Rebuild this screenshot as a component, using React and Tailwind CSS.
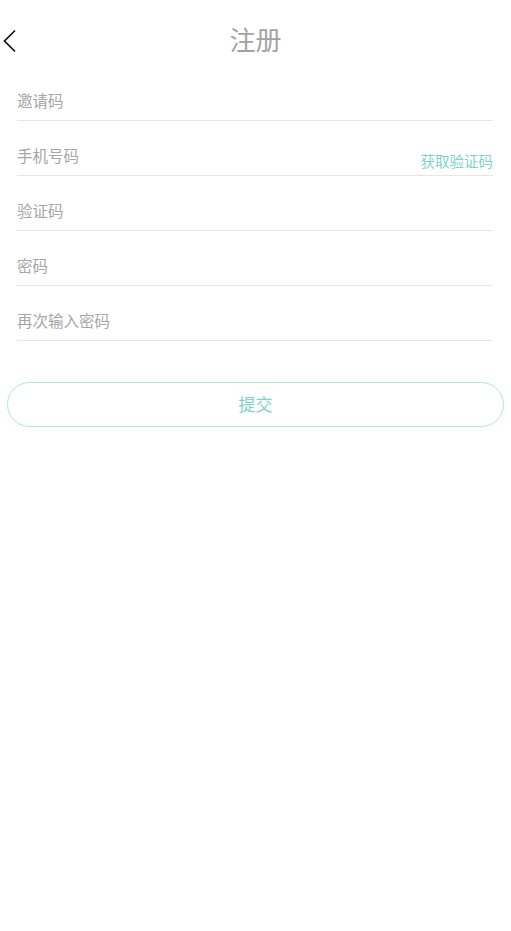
const fields = [
  { name: "invite", label: "邀请码" },
  { name: "phone", label: "手机号码", code: true },
  { name: "code", label: "验证码" },
  { name: "pwd", label: "密码" },
  { name: "pwd2", label: "再次输入密码" },
];

const font = { fontFamily: '"Noto Sans CJK SC", "Noto Sans", sans-serif' };

export default function App() {
  return (
    <div className="min-h-[931px] w-full bg-white" style={font}>
      {/* header */}
      <div className="relative flex h-[66px] items-start justify-center pt-[24px]">
        <button className="absolute left-[2px] top-[29px] h-[24px] w-[16px]">
          <svg width="16" height="24" viewBox="0 0 16 24" fill="none">
            <path d="M13 1.5 L2.5 12 L13 22.5" stroke="#111" strokeWidth="1.7" />
          </svg>
        </button>
        <h1 className="text-[26px] leading-[30px] text-[#a3a3a3]">注册</h1>
      </div>

      {/* form */}
      <div className="pl-[17px] pr-[18px]">
        {fields.map((f) => (
          <div
            key={f.name}
            className="flex h-[55px] items-end justify-between border-b border-[#e6e6e6] pb-[9px]"
          >
            <span className="text-[15.5px] leading-[22px] text-[#a6a6a6]">{f.label}</span>
            {f.code && (
              <span className="mb-[-5px] text-[14.5px] leading-[20px] text-[#7fd2ca]">获取验证码</span>
            )}
          </div>
        ))}
      </div>

      <div className="px-[7px] pt-[41px]">
        <button className="flex h-[45px] w-full items-center justify-center rounded-full border border-[#b2e5e0] pb-[2px] text-[17px] text-[#80d3cb]">
          提交
        </button>
      </div>
    </div>
  );
}
